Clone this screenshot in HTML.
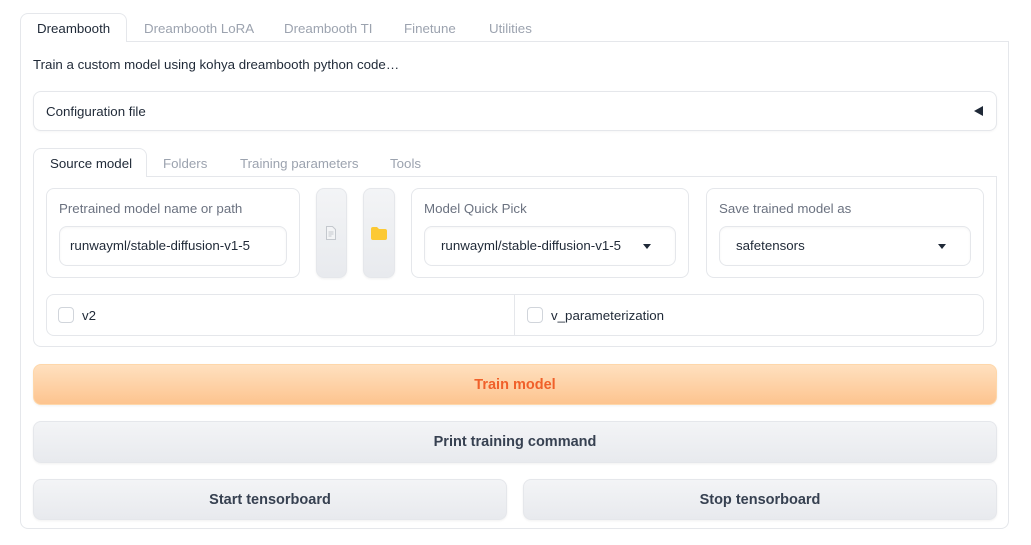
<!DOCTYPE html>
<html><head><style>
*{box-sizing:border-box;margin:0;padding:0}
body{width:1031px;height:545px;background:#fff;font-family:"Liberation Sans",sans-serif;font-size:13.3px;color:#374151;position:relative;overflow:hidden}
.a{position:absolute}
.box{position:absolute;border:1px solid #e5e7eb;border-radius:8px;background:#fff}
.lbl{position:absolute;color:#6b7280;font-size:13.3px}
.inp{position:absolute;border:1px solid #e5e7eb;border-radius:8px;background:#fff;box-shadow:inset 0 1px 2px rgba(0,0,0,.04);padding-left:10px;line-height:38px;color:#1f2937}
.btn{position:absolute;border:1px solid #e5e7eb;border-radius:8px;background:linear-gradient(#f3f4f6,#e8eaee);text-align:center;font-weight:bold;font-size:14.5px;color:#374151;box-shadow:0 1px 2px rgba(0,0,0,.06)}
.tab{position:absolute;color:#9ca3af;font-size:13.3px}
.cb{position:absolute;width:16px;height:16px;border:1px solid #d1d5db;border-radius:4px;background:#fff}
.arr{position:absolute;width:0;height:0;border-left:4px solid transparent;border-right:4px solid transparent;border-top:5px solid #1f2937}
</style></head><body>
<div class="a" style="left:20px;top:41px;width:989px;height:488px;border:1px solid #e5e7eb;border-radius:0 0 8px 8px"></div>
<div class="a" style="left:20px;top:13px;width:107px;height:29px;border:1px solid #e5e7eb;border-bottom:none;border-radius:8px 8px 0 0;background:#fff"></div>
<div class="a" style="left:37px;top:21px;color:#1f2937">Dreambooth</div>
<div class="tab" style="left:144px;top:21px">Dreambooth LoRA</div>
<div class="tab" style="left:284px;top:21px">Dreambooth TI</div>
<div class="tab" style="left:404px;top:21px">Finetune</div>
<div class="tab" style="left:489px;top:21px">Utilities</div>

<div class="a" style="left:33px;top:57px;color:#1f2937">Train a custom model using kohya dreambooth python code…</div>

<div class="box" style="left:33px;top:91px;width:964px;height:40px;box-shadow:0 1px 2px rgba(0,0,0,.04)"></div>
<div class="a" style="left:46px;top:104px;color:#1f2937">Configuration file</div>
<div class="a" style="left:974px;top:106px;width:0;height:0;border-top:5px solid transparent;border-bottom:5px solid transparent;border-right:9px solid #1f2937"></div>

<div class="a" style="left:33px;top:176px;width:964px;height:171px;border:1px solid #e5e7eb;border-radius:0 0 8px 8px"></div>
<div class="a" style="left:33px;top:148px;width:114px;height:29px;border:1px solid #e5e7eb;border-bottom:none;border-radius:8px 8px 0 0;background:#fff"></div>
<div class="a" style="left:50px;top:156px;color:#1f2937">Source model</div>
<div class="tab" style="left:163px;top:156px">Folders</div>
<div class="tab" style="left:240px;top:156px">Training parameters</div>
<div class="tab" style="left:390px;top:156px">Tools</div>

<div class="box" style="left:46px;top:188px;width:254px;height:90px"></div>
<div class="lbl" style="left:59px;top:201px">Pretrained model name or path</div>
<div class="inp" style="left:59px;top:226px;width:228px;height:40px">runwayml/stable-diffusion-v1-5</div>

<div class="btn" style="left:316px;top:188px;width:31px;height:90px"></div>
<svg class="a" style="left:325px;top:226px" width="12" height="14" viewBox="0 0 12 14"><path d="M1.5 .5h6l3 3v10h-9z" fill="#f3f4f6" stroke="#c4c8ce"/><path d="M3.5 6h5M3.5 8h5M3.5 10h3" stroke="#c4c8ce"/></svg>
<div class="btn" style="left:363px;top:188px;width:32px;height:90px"></div>
<svg class="a" style="left:371px;top:227px" width="16" height="13" viewBox="0 0 16 13"><path d="M0 2q0-2 2-2h4l2 2h6q2 0 2 2v7q0 2-2 2H2q-2 0-2-2z" fill="#fcc934"/></svg>

<div class="box" style="left:411px;top:188px;width:278px;height:90px"></div>
<div class="lbl" style="left:424px;top:201px">Model Quick Pick</div>
<div class="inp" style="left:424px;top:226px;width:252px;height:40px;padding-left:16px">runwayml/stable-diffusion-v1-5</div>
<div class="arr" style="left:643px;top:244px"></div>

<div class="box" style="left:706px;top:188px;width:278px;height:90px"></div>
<div class="lbl" style="left:719px;top:201px">Save trained model as</div>
<div class="inp" style="left:719px;top:226px;width:252px;height:40px;padding-left:16px">safetensors</div>
<div class="arr" style="left:938px;top:244px"></div>

<div class="box" style="left:46px;top:294px;width:938px;height:42px"></div>
<div class="a" style="left:514px;top:295px;width:1px;height:40px;background:#e5e7eb"></div>
<div class="cb" style="left:58px;top:307px"></div>
<div class="a" style="left:82px;top:308px;color:#1f2937">v2</div>
<div class="cb" style="left:527px;top:307px"></div>
<div class="a" style="left:551px;top:308px;color:#1f2937">v_parameterization</div>

<div class="btn" style="left:33px;top:364px;width:964px;height:41px;line-height:40px;background:linear-gradient(#ffe0bf,#fdc48f);border-color:#fed7aa;color:#f0602a">Train model</div>
<div class="btn" style="left:33px;top:421px;width:964px;height:42px;line-height:41px">Print training command</div>
<div class="btn" style="left:33px;top:479px;width:474px;height:41px;line-height:40px">Start tensorboard</div>
<div class="btn" style="left:523px;top:479px;width:474px;height:41px;line-height:40px">Stop tensorboard</div>
</body></html>
